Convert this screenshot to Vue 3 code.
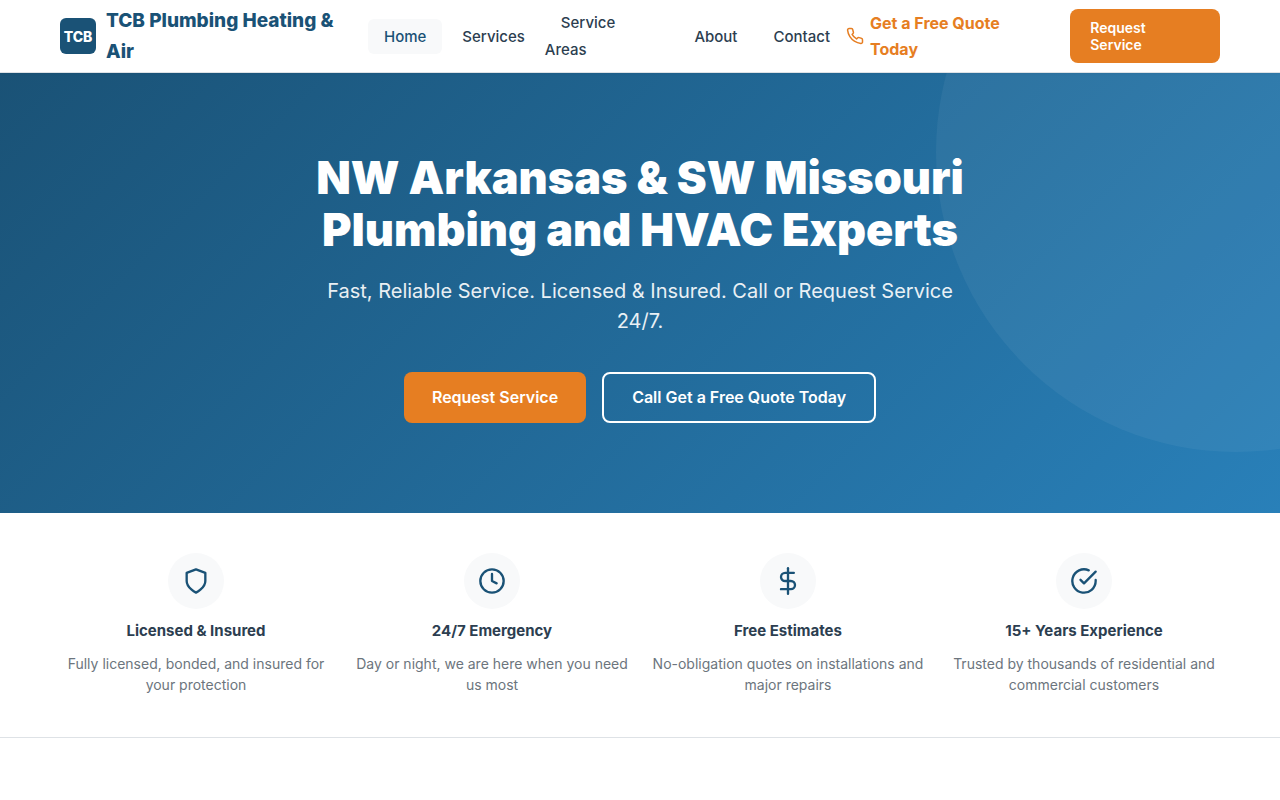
<script setup>
import { ref } from 'vue'

const active = ref('Home')

const links = ['Home', 'Services', 'Service Areas', 'About', 'Contact']

const features = [
  { icon: 'shield', title: 'Licensed & Insured', text: 'Fully licensed, bonded, and insured for your protection' },
  { icon: 'clock', title: '24/7 Emergency', text: 'Day or night, we are here when you need us most' },
  { icon: 'dollar', title: 'Free Estimates', text: 'No-obligation quotes on installations and major repairs' },
  { icon: 'check', title: '15+ Years Experience', text: 'Trusted by thousands of residential and commercial customers' },
]
</script>

<template>
  <header class="header">
    <div class="container header-inner">
      <a href="#" class="logo">
        <span class="logo-mark">TCB</span>
        <span>TCB Plumbing Heating &amp; Air</span>
      </a>
      <nav>
        <ul class="nav-list">
          <li v-for="link in links" :key="link">
            <a href="#" :class="{ 'is-active': link === active }" @click.prevent="active = link">{{ link }}</a>
          </li>
        </ul>
      </nav>
      <div class="header-cta">
        <a href="#" class="phone">
          <svg viewBox="0 0 24 24" width="18" height="18">
            <path d="M22 16.92v3a2 2 0 0 1-2.18 2 19.79 19.79 0 0 1-8.63-3.07 19.5 19.5 0 0 1-6-6 19.79 19.79 0 0 1-3.07-8.67A2 2 0 0 1 4.11 2h3a2 2 0 0 1 2 1.72 12.84 12.84 0 0 0 .7 2.81 2 2 0 0 1-.45 2.11L8.09 9.91a16 16 0 0 0 6 6l1.27-1.27a2 2 0 0 1 2.11-.45 12.84 12.84 0 0 0 2.81.7A2 2 0 0 1 22 16.92z" />
          </svg>
          <span>Get a Free Quote Today</span>
        </a>
        <a href="#" class="btn btn-small">Request Service</a>
      </div>
    </div>
  </header>

  <main>
    <section class="hero">
      <div class="hero-content">
        <h1>NW Arkansas &amp; SW Missouri Plumbing and HVAC Experts</h1>
        <p>Fast, Reliable Service. Licensed &amp; Insured. Call or Request Service 24/7.</p>
        <div class="hero-buttons">
          <a href="#" class="btn">Request Service</a>
          <a href="#" class="btn btn-outline">Call Get a Free Quote Today</a>
        </div>
      </div>
    </section>

    <section class="trust">
      <div class="container trust-grid">
        <div v-for="item in features" :key="item.title" class="trust-item">
          <div class="trust-icon">
            <svg viewBox="0 0 24 24" width="28" height="28">
              <path v-if="item.icon === 'shield'" d="M12 22s8-4 8-10V5l-8-3-8 3v7c0 6 8 10 8 10z" />
              <template v-else-if="item.icon === 'clock'">
                <circle cx="12" cy="12" r="10" />
                <polyline points="12 6 12 12 16 14" />
              </template>
              <template v-else-if="item.icon === 'dollar'">
                <line x1="12" y1="1" x2="12" y2="23" />
                <path d="M17 5H9.5a3.5 3.5 0 0 0 0 7h5a3.5 3.5 0 0 1 0 7H6" />
              </template>
              <template v-else>
                <path d="M22 11.08V12a10 10 0 1 1-5.93-9.14" />
                <polyline points="22 4 12 14.01 9 11.01" />
              </template>
            </svg>
          </div>
          <h3>{{ item.title }}</h3>
          <p>{{ item.text }}</p>
        </div>
      </div>
    </section>
  </main>
</template>

<style>
body {
  background: #fff;
  color: #2c3e50;
  font: 16px/26px Inter, "Liberation Sans", sans-serif;
  -webkit-font-smoothing: antialiased;
}
</style>

<style scoped>
* { box-sizing: border-box; }
a { color: inherit; text-decoration: none; }
h1, h3, p { margin: 0; }
svg {
  flex-shrink: 0;
  fill: none;
  stroke: currentColor;
  stroke-width: 2;
  stroke-linecap: round;
  stroke-linejoin: round;
}
.container {
  max-width: 1200px;
  margin: 0 auto;
  padding: 0 20px;
}

.header {
  position: relative;
  z-index: 10;
  background: #fff;
  box-shadow: 0 1px 0 #dee2e6, 0 1px 3px rgba(0, 0, 0, 0.08);
}
.header-inner {
  display: flex;
  align-items: center;
  justify-content: space-between;
  min-height: 72px;
}
.logo {
  display: flex;
  align-items: center;
  gap: 10px;
  padding-right: 4px;
  color: #1a5276;
  font-size: 19px;
  font-weight: 800;
  line-height: 31px;
}
.logo-mark {
  display: flex;
  flex-shrink: 0;
  align-items: center;
  justify-content: center;
  width: 36px;
  height: 36px;
  border-radius: 6px;
  color: #fff;
  background: #1a5276;
  font-size: 14px;
}
.nav-list {
  display: flex;
  align-items: center;
  gap: 4px;
  margin: 0;
  padding: 0;
  list-style: none;
}
.nav-list a {
  padding: 8px 16px;
  border-radius: 6px;
  font-size: 15px;
  font-weight: 500;
}
.nav-list a.is-active { color: #1a5276; background: #f8f9fa; }
.header-cta {
  display: flex;
  align-items: center;
  gap: 20px;
}
.phone {
  display: flex;
  align-items: center;
  gap: 6px;
  color: #e67e22;
  font-weight: 700;
}
.btn {
  padding: 14px 28px;
  border-radius: 8px;
  color: #fff;
  background: #e67e22;
  font-size: 16px;
  font-weight: 600;
  line-height: 23px;
}
.btn-small {
  padding: 10px 20px;
  font-size: 14px;
  line-height: 17px;
}

.hero {
  position: relative;
  overflow: hidden;
  padding: 80px 20px 90px;
  color: #fff;
  background: linear-gradient(135deg, #1a5276 0%, #2980b9 100%);
  text-align: center;
}
.hero::before {
  content: '';
  position: absolute;
  top: -50%;
  right: -20%;
  width: 600px;
  height: 600px;
  border-radius: 50%;
  background: rgba(255, 255, 255, 0.05);
}
.hero-content {
  position: relative;
  max-width: 700px;
  margin: 0 auto;
}
.hero h1 {
  margin-bottom: 20px;
  font-size: 45px;
  font-weight: 900;
  line-height: 52px;
}
.hero p {
  max-width: 640px;
  margin: 0 auto 36px;
  font-size: 20px;
  line-height: 30px;
  opacity: 0.9;
}
.hero-buttons {
  display: flex;
  flex-wrap: wrap;
  justify-content: center;
  gap: 16px;
}
.btn-outline {
  padding: 12px 28px;
  border: 2px solid #fff;
  background: transparent;
}

.trust {
  padding: 40px 0 42px;
  border-bottom: 1px solid #dee2e6;
}
.trust-grid {
  display: grid;
  grid-template-columns: repeat(4, 1fr);
  gap: 24px;
}
.trust-item { text-align: center; }
.trust-icon {
  display: flex;
  align-items: center;
  justify-content: center;
  width: 56px;
  height: 56px;
  margin: 0 auto 9px;
  border-radius: 50%;
  color: #1a5276;
  background: #f8f9fa;
}
.trust-item h3 {
  margin-bottom: 9px;
  font-size: 15px;
  font-weight: 700;
  line-height: 26px;
}
.trust-item p {
  color: #6c757d;
  font-size: 14px;
  line-height: 21px;
}
</style>
